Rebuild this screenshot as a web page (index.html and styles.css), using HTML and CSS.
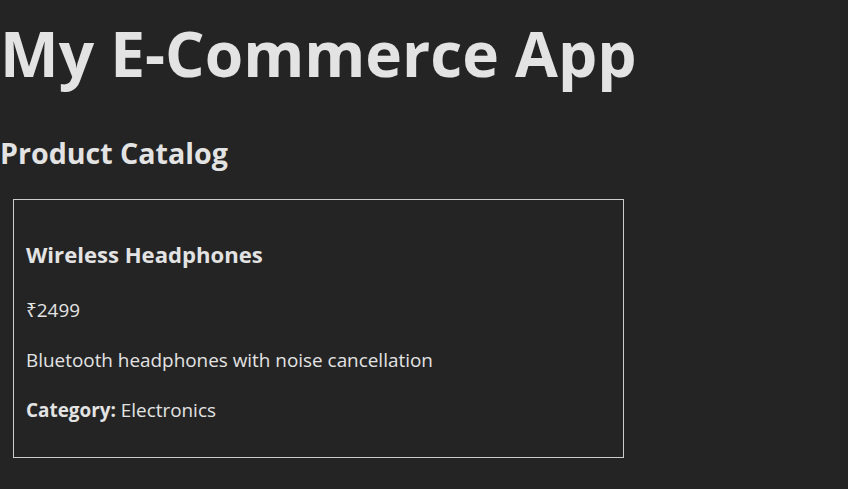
FILE: index.html
```html
<!DOCTYPE html>
<html lang="en">
<head>
<meta charset="utf-8">
<title>My E-Commerce App</title>
<link rel="stylesheet" href="styles.css">
</head>
<body>
<div class="app">
  <h1 class="title">My E-Commerce App</h1>
  <h2 class="section-title">Product Catalog</h2>
  <div class="product-list">
    <div class="product-card">
      <h3 class="product-name">Wireless Headphones</h3>
      <p class="product-price">₹2499</p>
      <p class="product-desc">Bluetooth headphones with noise cancellation</p>
      <p class="product-cat"><strong>Category:</strong> Electronics</p>
    </div>
  </div>
</div>
</body>
</html>
```
FILE: styles.css
```css
html, body {
  margin: 0;
  padding: 0;
}
body {
  background: #242424;
  color: #e3e3e3;
  font-family: "Open Sans", "Noto Sans", sans-serif;
  font-size: 18.9px;
  line-height: 30px;
  -webkit-font-smoothing: antialiased;
}
.app {
  display: flow-root;
}
.title {
  font-size: 62.2px;
  font-weight: 700;
  line-height: 70px;
  margin: 18px 0 42px;
}
.section-title {
  font-size: 28.6px;
  font-weight: 700;
  line-height: 45px;
  margin: 0;
}
.product-list {
  display: flex;
  padding-top: 24px;
}
.product-card {
  box-sizing: border-box;
  width: 611px;
  margin-left: 13px;
  padding: 13px 12px 12px;
  border: 1px solid #cccccc;
}
.product-name {
  font-size: 22.1px;
  font-weight: 700;
  line-height: 35px;
  margin: 24px 0 23px;
}
.product-card p {
  margin: 20px 0;
}
.product-card .product-price {
  margin-top: 0;
}
.product-cat strong {
  font-weight: 700;
}
```
